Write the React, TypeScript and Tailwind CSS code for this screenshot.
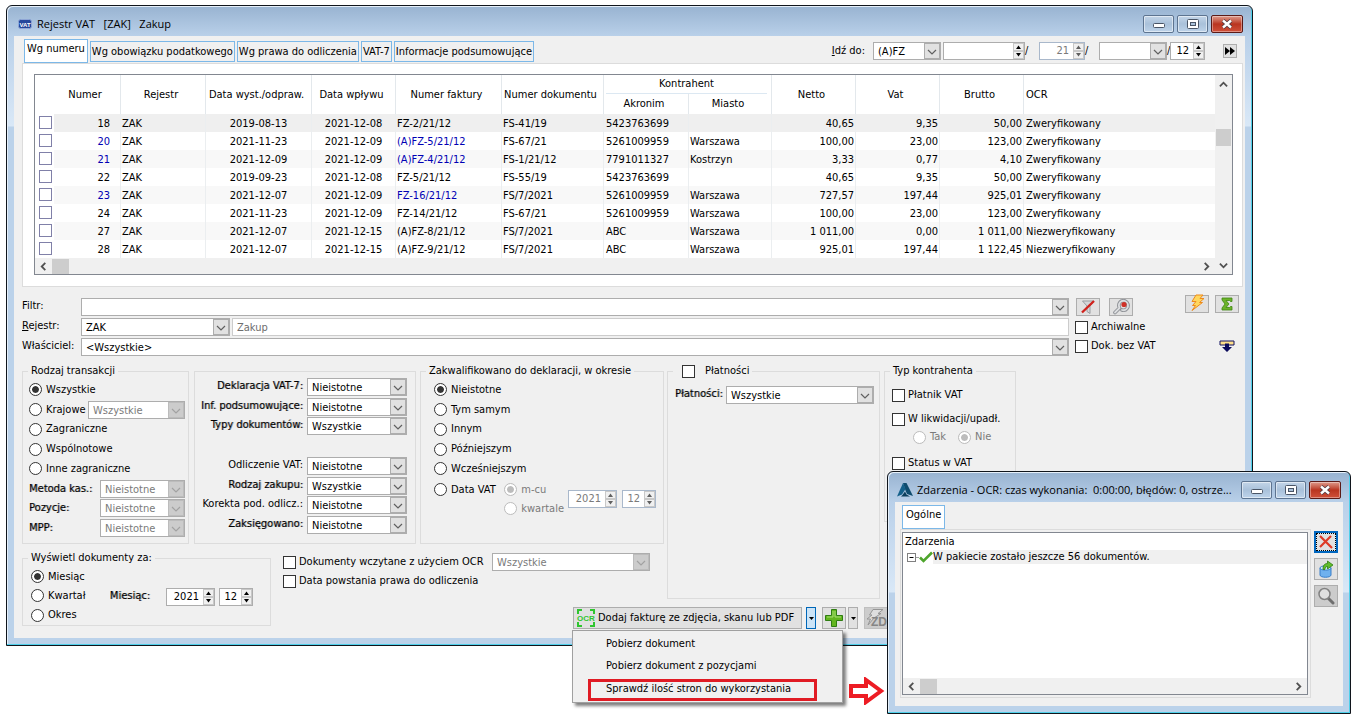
import clsx from 'clsx';
import { ReactNode } from 'react';

interface IInvoice {
    no: number;
    date: string;
    received: string;
    invoice: string;
    document: string;
    acronym: string;
    city: string;
    net: string;
    vat: string;
    gross: string;
    ocr: string;
    blueNo?: boolean;
    blueInvoice?: boolean;
}

const invoices: IInvoice[] = [
    { no: 18, date: '2019-08-13', received: '2021-12-08', invoice: 'FZ-2/21/12', document: 'FS-41/19', acronym: '5423763699', city: '', net: '40,65', vat: '9,35', gross: '50,00', ocr: 'Zweryfikowany' },
    { no: 20, date: '2021-11-23', received: '2021-12-09', invoice: '(A)FZ-5/21/12', document: 'FS-67/21', acronym: '5261009959', city: 'Warszawa', net: '100,00', vat: '23,00', gross: '123,00', ocr: 'Zweryfikowany', blueNo: true, blueInvoice: true },
    { no: 21, date: '2021-12-09', received: '2021-12-09', invoice: '(A)FZ-4/21/12', document: 'FS-1/21/12', acronym: '7791011327', city: 'Kostrzyn', net: '3,33', vat: '0,77', gross: '4,10', ocr: 'Zweryfikowany', blueNo: true, blueInvoice: true },
    { no: 22, date: '2019-09-23', received: '2021-12-08', invoice: 'FZ-5/21/12', document: 'FS-55/19', acronym: '5423763699', city: '', net: '40,65', vat: '9,35', gross: '50,00', ocr: 'Zweryfikowany' },
    { no: 23, date: '2021-12-07', received: '2021-12-09', invoice: 'FZ-16/21/12', document: 'FS/7/2021', acronym: '5261009959', city: 'Warszawa', net: '727,57', vat: '197,44', gross: '925,01', ocr: 'Zweryfikowany', blueNo: true, blueInvoice: true },
    { no: 24, date: '2021-11-23', received: '2021-12-09', invoice: 'FZ-14/21/12', document: 'FS-67/21', acronym: '5261009959', city: 'Warszawa', net: '100,00', vat: '23,00', gross: '123,00', ocr: 'Zweryfikowany' },
    { no: 27, date: '2021-12-07', received: '2021-12-15', invoice: '(A)FZ-8/21/12', document: 'FS/7/2021', acronym: 'ABC', city: 'Warszawa', net: '1 011,00', vat: '0,00', gross: '1 011,00', ocr: 'Niezweryfikowany' },
    { no: 28, date: '2021-12-07', received: '2021-12-15', invoice: '(A)FZ-9/21/12', document: 'FS/7/2021', acronym: 'ABC', city: 'Warszawa', net: '925,01', vat: '197,44', gross: '1 122,45', ocr: 'Niezweryfikowany' },
];

const tabs = ['Wg obowiązku podatkowego', 'Wg prawa do odliczenia', 'VAT-7', 'Informacje podsumowujące'];

const strong = '[text-shadow:1px_0_0_#00000066]';

const Chevron = ({ dir, className }: { dir: 'up' | 'down' | 'left' | 'right'; className?: string }) => {
    const paths = {
        up: 'M1 7 L5 3 L9 7',
        down: 'M1 3 L5 7 L9 3',
        left: 'M7 1 L3 5 L7 9',
        right: 'M3 1 L7 5 L3 9',
    };
    return (
        <svg viewBox="0 0 10 10" className={clsx('size-[9px]', className)} fill="none" stroke="currentColor" strokeWidth="2">
            <path d={paths[dir]} />
        </svg>
    );
};

interface ISelectProps {
    id: string;
    value: string;
    label?: string;
    className?: string;
    disabled?: boolean;
}

const Select = ({ id, value, label, className, disabled }: ISelectProps) => (
    <span className={clsx('flex h-[18px] border border-[#adadad] bg-white', className)}>
        <select
            id={id}
            aria-label={label}
            disabled={disabled}
            className={clsx('min-w-0 flex-1 appearance-none pl-1 pt-[1px] outline-none', disabled && 'text-[#7a7a7a]')}
        >
            <option>{value}</option>
        </select>
        <span
            className={clsx(
                'flex w-4 items-center justify-center border',
                disabled ? 'border-[#bcbcbc] bg-[#cccccc] text-[#a2a2a2]' : 'border-[#adadad] bg-[#e1e1e1] text-[#606060]'
            )}
        >
            <svg viewBox="0 0 10 10" className="mt-1 size-[10px]" fill="none" stroke="currentColor" strokeWidth="1.2">
                <path d="M1 2 L5 6 L9 2" />
            </svg>
        </span>
    </span>
);

interface ISpinProps {
    label: string;
    value: string;
    className?: string;
    disabled?: boolean;
}

const Spin = ({ label, value, className, disabled }: ISpinProps) => (
    <span className={clsx('flex h-[18px] border bg-white', disabled ? 'border-[#a9b8cb]' : 'border-[#adadad]', className)}>
        <input
            aria-label={label}
            defaultValue={value}
            disabled={disabled}
            className={clsx('min-w-0 flex-1 pr-1 text-right outline-none', disabled && 'text-[#7a7a7a]')}
        />
        <span className={clsx('flex w-[11px] flex-col', disabled ? 'text-[#606060]' : 'text-black')}>
            <button type="button" aria-label={`${label} +`} className="flex h-2 items-center justify-center border border-[#c8c8c8] bg-[#f0f0f0]">
                <svg viewBox="0 0 7 4" className="h-1 w-[7px]" fill="currentColor"><path d="M1 4 L3.5 0.500 L6 4 Z" /></svg>
            </button>
            <button type="button" aria-label={`${label} -`} className="flex h-2 items-center justify-center border border-[#c8c8c8] bg-[#f0f0f0]">
                <svg viewBox="0 0 7 4" className="h-1 w-[7px]" fill="currentColor"><path d="M1 0 L3.5 3.500 L6 0 Z" /></svg>
            </button>
        </span>
    </span>
);

interface IOptionProps {
    label: string;
    name?: string;
    checked?: boolean;
    disabled?: boolean;
}

const Radio = ({ label, name, checked, disabled }: IOptionProps) => (
    <label className={clsx('flex items-center gap-1 whitespace-nowrap', disabled && 'text-[#7a7a7a]')}>
        <input
            type="radio"
            name={name}
            defaultChecked={checked}
            disabled={disabled}
            className={clsx(
                'size-[13px] shrink-0 appearance-none rounded-full border bg-white p-[2px] checked:bg-clip-content checked:shadow-[inset_0_0_0_2px_#fff]',
                disabled ? 'border-[#bcbcbc] checked:bg-[#bcbcbc]' : 'border-[#333] checked:bg-[#333]'
            )}
        />
        {label}
    </label>
);

const Check = ({ label, className }: { label: string; className?: string }) => (
    <label className={clsx('flex items-center gap-[3px] whitespace-nowrap', className)}>
        <input type="checkbox" className="size-[13px] shrink-0 appearance-none border border-[#333] bg-white checked:bg-[#333]" />
        {label}
    </label>
);

const Group = ({ legend, className, children }: { legend?: ReactNode; className?: string; children?: ReactNode }) => (
    <fieldset className={clsx('min-w-0 border border-[#dcdcdc]', className)}>
        {legend && <legend className="ml-[5px] h-4 px-[3px] leading-4">{legend}</legend>}
        {children}
    </fieldset>
);

const WindowButtons = () => (
    <div className="flex gap-[3px]">
        <button type="button" aria-label="Minimalizuj" className="flex h-[18px] w-[31px] items-center justify-center rounded-[2px] border border-[#5d7490] bg-gradient-to-b from-[#c3d5e8] via-[#a9c1da] to-[#bdd3ea] shadow-[inset_0_0_0_1px_#ffffff80]">
            <svg viewBox="0 0 12 5" className="mt-1 h-[5px] w-3"><rect x=".5" y=".5" width="11" height="4" rx="1" fill="#fff" stroke="#4a5566" /></svg>
        </button>
        <button type="button" aria-label="Maksymalizuj" className="flex h-[18px] w-[31px] items-center justify-center rounded-[2px] border border-[#5d7490] bg-gradient-to-b from-[#c3d5e8] via-[#a9c1da] to-[#bdd3ea] shadow-[inset_0_0_0_1px_#ffffff80]">
            <svg viewBox="0 0 12 10" className="h-[10px] w-3">
                <rect x=".5" y=".5" width="11" height="9" rx="1" fill="#fff" stroke="#4a5566" />
                <rect x="3.5" y="3.5" width="5" height="3" fill="#a9c1da" stroke="#4a5566" />
            </svg>
        </button>
        <button type="button" aria-label="Zamknij" className="flex h-[18px] w-8 items-center justify-center rounded-[2px] border border-[#5b1a17] bg-gradient-to-b from-[#dd9a8c] via-[#b93420] to-[#d0503a] shadow-[inset_0_0_0_1px_#ffffff60]">
            <svg viewBox="0 0 12 10" className="h-[10px] w-3">
                <path d="M2 1.5 L10 8.5 M10 1.5 L2 8.5" stroke="#4b3a44" strokeWidth="4" />
                <path d="M2 1.5 L10 8.5 M10 1.5 L2 8.5" stroke="#fff" strokeWidth="2.4" />
            </svg>
        </button>
    </div>
);

const Window = ({ icon, title, className, children }: { icon: ReactNode; title: string; className?: string; children: ReactNode }) => (
    <section
        className={clsx(
            'rounded-t-md border border-[#10151c] px-[7px] pb-[7px] shadow-[inset_-1px_-1px_0_#4fd0ea,inset_1px_1px_0_#e6f0fa]',
            'bg-[linear-gradient(#98b3d1,#b9d0e9_30px,#d9e8f7_120px,#bbd2ea_121px)]',
            className
        )}
    >
        <header className="flex h-[30px] items-center gap-1 pl-[2px] pr-[2px] pt-[5px]">
            {icon}
            <h1 className="min-w-0 flex-1 whitespace-pre font-['Open_Sans',sans-serif] text-[11px]">{title}</h1>
            <WindowButtons />
        </header>
        {children}
    </section>
);

const HScroll = () => (
    <div className="flex h-4 items-center bg-[#f0f0f0] text-[#505050]">
        <span className="flex w-[17px] justify-center"><Chevron dir="left" /></span>
        <span className="h-[15px] w-[17px] bg-[#cdcdcd]" />
        <span className="ml-auto flex w-[17px] justify-center"><Chevron dir="right" /></span>
    </div>
);

const ToolButton = ({ label, className, children }: { label: string; className?: string; children: ReactNode }) => (
    <button
        type="button"
        aria-label={label}
        className={clsx('flex w-6 shrink-0 items-center justify-center border border-[#adadad]', className)}
    >
        {children}
    </button>
);

const InvoiceTable = () => {
    const head = 'border-r border-[#e3e8ec] font-normal';
    const cell = 'border-r border-[#ebeef0] pt-[2px]';
    return (
        <table className="w-full table-fixed border-separate border-spacing-0 whitespace-nowrap">
            <colgroup>
                <col className="w-[19px]" />
                <col className="w-[67px]" />
                <col className="w-[85px]" />
                <col className="w-[106px]" />
                <col className="w-[84px]" />
                <col className="w-[106px]" />
                <col className="w-[102px]" />
                <col className="w-[85px]" />
                <col className="w-[83px]" />
                <col className="w-[84px]" />
                <col className="w-[84px]" />
                <col className="w-[84px]" />
                <col />
            </colgroup>
            <thead>
                <tr className="h-[19px]">
                    <th rowSpan={2} aria-label="Wybór" />
                    <th rowSpan={2} className={clsx(head, 'pr-1')}>Numer</th>
                    <th rowSpan={2} className={clsx(head, 'pr-1')}>Rejestr</th>
                    <th rowSpan={2} className={clsx(head, 'pr-1')}>Data wyst./odpraw.</th>
                    <th rowSpan={2} className={clsx(head, 'pr-1')}>Data wpływu</th>
                    <th rowSpan={2} className={clsx(head, 'pr-1')}>Numer faktury</th>
                    <th rowSpan={2} className={clsx(head, 'pr-1')}>Numer dokumentu</th>
                    <th colSpan={2} className={clsx(head, 'p-0')}>
                        <div className="ml-[2px] mr-1 h-[19px] border-b border-[#dce8f2] leading-[18px]">Kontrahent</div>
                    </th>
                    <th rowSpan={2} className={clsx(head, 'pr-1')}>Netto</th>
                    <th rowSpan={2} className={clsx(head, 'pr-1')}>Vat</th>
                    <th rowSpan={2} className={clsx(head, 'pr-1')}>Brutto</th>
                    <th rowSpan={2} className="pl-[2px] text-left font-normal">OCR</th>
                </tr>
                <tr className="h-5">
                    <th className={clsx(head, 'pr-1')}>Akronim</th>
                    <th className={clsx(head, 'pr-1')}>Miasto</th>
                </tr>
            </thead>
            <tbody>
                {invoices.map((row, index) => (
                    <tr
                        key={row.no}
                        className={clsx('h-[18px] leading-4', index === 0 ? 'bg-[#efefef]' : index % 2 === 0 ? 'bg-[#f8f8f8]' : 'bg-white')}
                    >
                        <td className="bg-white pb-[1px] pl-1">
                            <input
                                type="checkbox"
                                aria-label={`Zaznacz ${row.no}`}
                                className="block size-[13px] appearance-none border border-[#8080a8] bg-white checked:bg-[#8080a8]"
                            />
                        </td>
                        <td className={clsx(cell, 'pr-[10px] text-right', row.blueNo && 'text-[#0000b4]')}>{row.no}</td>
                        <td className={clsx(cell, 'pl-[1px]')}>ZAK</td>
                        <td className={clsx(cell, 'text-center')}>{row.date}</td>
                        <td className={clsx(cell, 'text-center')}>{row.received}</td>
                        <td className={clsx(cell, 'pl-[1px]', row.blueInvoice && 'text-[#0000b4]')}>{row.invoice}</td>
                        <td className={clsx(cell, 'pl-[1px]')}>{row.document}</td>
                        <td className={clsx(cell, 'pl-[2px]')}>{row.acronym}</td>
                        <td className={clsx(cell, 'pl-[1px]')}>{row.city}</td>
                        <td className={clsx(cell, 'pr-[1px] text-right')}>{row.net}</td>
                        <td className={clsx(cell, 'pr-[1px] text-right')}>{row.vat}</td>
                        <td className={clsx(cell, 'pr-[1px] text-right')}>{row.gross}</td>
                        <td className="pl-[2px] pt-[2px]">{row.ocr}</td>
                    </tr>
                ))}
            </tbody>
        </table>
    );
};

const GoTo = () => (
    <div className="ml-auto flex items-start pt-[3px]">
        <label htmlFor="goto" className="mr-2 leading-[18px]"><u>I</u>dź do:</label>
        <Select id="goto" value="(A)FZ" className="mr-[2px] h-5 w-[68px]" />
        <Spin label="Numer" value="" className="w-[82px]" />
        <span className="w-[14px] leading-[18px]">/</span>
        <Spin label="Rok" value="21" disabled className="w-[46px]" />
        <span className="w-[14px] leading-[18px]">/</span>
        <Select id="series" label="Seria" value="" className="w-[68px]" />
        <span className="w-[3px] leading-[18px]">/</span>
        <Spin label="Miesiąc" value="12" className="w-[35px]" />
        <button type="button" aria-label="Przejdź" className="ml-[18px] mr-[6px] mt-[2px] flex size-[14px] items-center justify-center border border-[#adadad] bg-[#e1e1e1]">
            <svg viewBox="0 0 11 8" className="h-2 w-[11px] shrink-0"><path d="M0 0 L5 4 L0 8 Z M5 0 L10 4 L5 8 Z" /></svg>
        </button>
    </div>
);

const FilterRows = () => (
    <div className="mt-[11px] flex items-start">
        <div className="grid flex-1 grid-cols-[59px_1fr] gap-y-[2px] leading-4">
            <label htmlFor="filter">Filtr:</label>
            <Select id="filter" value="" />
            <label htmlFor="register"><u>R</u>ejestr:</label>
            <div className="flex gap-[2px]">
                <Select id="register" value="ZAK" className="w-[149px]" />
                <input aria-label="Nazwa rejestru" readOnly value="Zakup" className="h-[18px] min-w-0 flex-1 border border-[#cccccc] bg-white pl-1 text-[#6d6d6d] outline-none" />
            </div>
            <label htmlFor="owner">Właściciel:</label>
            <Select id="owner" value="<Wszystkie>" />
        </div>
        <div className="ml-[6px] flex w-[168px] flex-col">
            <div className="flex h-5 items-start">
                <ToolButton label="Wyczyść filtr" className="ml-[1px] h-[18px] bg-[#e1e1e1]">
                    <svg viewBox="0 0 18 16" className="h-4 w-[18px]">
                        <path d="M3.500 2 H15 L11 7 V14.500 L8 12.500 V7 Z" fill="#d4d6d9" stroke="#9a9da1" />
                        <path d="M3 13.500 L15 2" stroke="#d0211c" strokeWidth="2.4" />
                    </svg>
                </ToolButton>
                <ToolButton label="Konstruktor filtra" className="ml-[9px] h-[18px] bg-[#e1e1e1]">
                    <svg viewBox="0 0 18 16" className="h-4 w-[18px]" fill="none">
                        <path d="M3 13.500 L7.500 9 C5.500 4 9 1 13 2 C16 3 17 7 15 9.500 C14 11 12 11.500 10 11" stroke="#8b8e93" strokeWidth="3.600" strokeLinecap="round" />
                        <path d="M3 13.500 L7.500 9 C5.500 4 9 1 13 2 C16 3 17 7 15 9.500 C14 11 12 11.500 10 11" stroke="#dcdee0" strokeWidth="1.800" strokeLinecap="round" />
                        <circle cx="12" cy="5.500" r="2.600" fill="#cf3128" />
                    </svg>
                </ToolButton>
                <ToolButton label="Przelicz" className="-mt-[3px] ml-auto h-[18px] bg-[#e1e1e1]">
                    <svg viewBox="0 0 18 18" className="-mt-[2px] size-[18px] shrink-0">
                        <path d="M8 1 H15 L12 4.500 H16 L11.500 8.500 H14.500 L4 16.500 L7.500 11.500 H4.500 L8 7.500 H4 Z" fill="#ffd75e" stroke="#ee8a1c" strokeLinejoin="round" />
                    </svg>
                </ToolButton>
                <ToolButton label="Suma" className="-mt-[3px] ml-[6px] mr-[4px] h-[18px] bg-[#e1e1e1]">
                    <svg viewBox="0 0 14 14" className="size-[14px] shrink-0">
                        <path d="M2 1 H12 V4.500 H10.500 L9.500 3.500 H6 L9 7 L6 10.500 H9.500 L10.500 9.500 H12 V13 H2 V11 L5 7 L2 3 Z" fill="#6cb32a" stroke="#3f8512" strokeWidth=".8" />
                    </svg>
                </ToolButton>
            </div>
            <Check label="Archiwalne" className="h-5 pb-[2px]" />
            <div className="flex h-5 items-center justify-between pb-[4px]">
                <Check label="Dok. bez VAT" />
                <svg viewBox="0 0 16 12" className="mr-2 h-3 w-4">
                    <path d="M1 5 V1 H15 V5 Z" fill="#ffe08a" stroke="#101060" />
                    <path d="M6 3.500 H10 V7 H13 L8 12 L3 7 H6 Z" fill="#0b0b5c" />
                </svg>
            </div>
        </div>
    </div>
);

const transactionLimits = [
    { id: 'cash-method', label: 'Metoda kas.:' },
    { id: 'items', label: 'Pozycje:' },
    { id: 'mpp', label: 'MPP:' },
];

const declarationFilters = [
    { id: 'vat7', label: 'Deklaracja VAT-7:', value: 'Nieistotne', bold: true },
    { id: 'summary', label: 'Inf. podsumowujące:', value: 'Nieistotne', bold: true },
    { id: 'doc-types', label: 'Typy dokumentów:', value: 'Wszystkie', bold: true },
    null,
    { id: 'deduction', label: 'Odliczenie VAT:', value: 'Nieistotne', bold: false },
    { id: 'purchase', label: 'Rodzaj zakupu:', value: 'Wszystkie', bold: true },
    { id: 'correction', label: 'Korekta pod. odlicz.:', value: 'Nieistotne', bold: false },
    { id: 'posted', label: 'Zaksięgowano:', value: 'Nieistotne', bold: true },
];

const FilterGroups = () => (
    <div className="col-span-2 flex items-stretch">
        <Group legend="Rodzaj transakcji" className="w-[167px] pb-[5px]">
            <div className="mt-[1px] grid h-[158px] grid-rows-8 items-center pl-[6px] pr-[3px]">
                <Radio name="kind" label="Wszystkie" checked />
                <div className="flex items-center justify-between">
                    <Radio name="kind" label="Krajowe" />
                    <Select id="domestic" label="Krajowe" value="Wszystkie" disabled className="w-[97px]" />
                </div>
                <Radio name="kind" label="Zagraniczne" />
                <Radio name="kind" label="Wspólnotowe" />
                <Radio name="kind" label="Inne zagraniczne" />
                {transactionLimits.map((item) => (
                    <div key={item.id} className="flex items-center justify-between">
                        <label htmlFor={item.id} className={strong}>{item.label}</label>
                        <Select id={item.id} value="Nieistotne" disabled className="w-[85px]" />
                    </div>
                ))}
            </div>
        </Group>
        <Group className="ml-[5px] mt-2 w-[222px] pb-2 pt-[5px]">
            <div className="grid h-[158px] grid-rows-8 items-center pr-2">
                {declarationFilters.map((item, index) =>
                    item ? (
                        <div key={item.id} className="flex items-start justify-end gap-1">
                            <label htmlFor={item.id} className={clsx('leading-4', item.bold && strong)}>{item.label}</label>
                            <Select id={item.id} value={item.value} className="w-[100px]" />
                        </div>
                    ) : (
                        <div key={index} />
                    )
                )}
            </div>
        </Group>
        <Group legend="Zakwalifikowano do deklaracji, w okresie" className="ml-1 flex-1">
            <div className="mt-[1px] grid h-[158px] grid-rows-8 items-center pl-[13px] pr-[7px]">
                <Radio name="period" label="Nieistotne" checked />
                <Radio name="period" label="Tym samym" />
                <Radio name="period" label="Innym" />
                <Radio name="period" label="Późniejszym" />
                <Radio name="period" label="Wcześniejszym" />
                <div className="row-span-2 flex items-center">
                    <div className="self-start"><Radio name="period" label="Data VAT" /></div>
                    <div className="ml-auto mr-1 flex flex-col gap-1 leading-[15px]">
                        <Radio name="vat-date" label="m-cu" checked disabled />
                        <Radio name="vat-date" label="kwartale" disabled />
                    </div>
                    <Spin label="Rok deklaracji" value="2021" disabled className="w-[49px]" />
                    <Spin label="Miesiąc deklaracji" value="12" disabled className="ml-[5px] w-[34px]" />
                </div>
            </div>
        </Group>
    </div>
);

const DisplayRange = () => (
    <Group legend="Wyświetl dokumenty za:" className="row-span-2 mt-[6px] self-start">
        <div className="mt-[1px] flex items-center">
            <div className="grid h-[58px] grid-rows-3 items-center pl-2">
                <Radio name="range" label="Miesiąc" checked />
                <Radio name="range" label="Kwartał" />
                <Radio name="range" label="Okres" />
            </div>
            <span className={clsx('ml-auto mr-4', strong)}>Miesiąc:</span>
            <Spin label="Rok" value="2021" className="mt-[2px] w-[49px]" />
            <Spin label="Miesiąc" value="12" className="ml-1 mr-[17px] mt-[2px] w-[34px]" />
        </div>
    </Group>
);

const SplitArrow = ({ label, active }: { label: string; active?: boolean }) => (
    <button
        type="button"
        aria-label={label}
        className={clsx('flex h-[22px] w-[10px] items-center justify-center border', active ? 'border-[#0067b8] bg-[#cce4f7]' : 'border-[#adadad] bg-[#e1e1e1]')}
    >
        <svg viewBox="0 0 5 3" className="h-[3px] w-[5px] shrink-0"><path d="M0 0 H5 L2.500 3 Z" /></svg>
    </button>
);

const OcrMenu = () => (
    <div role="menu" className="absolute left-0 top-full z-10 -ml-[1px] mt-[1px] h-[73px] w-[271px] border border-[#a0a0a0] bg-[#f0f0f0] shadow-[3px_3px_3px_#00000080]">
        <button type="button" role="menuitem" className="block h-[22px] pl-[33px] pt-1">Pobierz dokument</button>
        <button type="button" role="menuitem" className="block h-[22px] pl-[33px] pt-1">Pobierz dokument z pozycjami</button>
        <button type="button" role="menuitem" className="ml-[15px] mt-1 flex h-[22px] w-[229px] items-center border-[3px] border-[#e01b24] pb-[2px] pl-[15px]">
            Sprawdź ilość stron do wykorzystania
        </button>
    </div>
);

const BottomBar = () => (
    <div className="col-span-3 flex pb-[9px] pl-[302px] pt-2">
        <div className="relative">
            <button type="button" className="flex h-[22px] w-[229px] items-center gap-[2px] whitespace-nowrap border border-[#adadad] bg-[#e1e1e1] pl-[2px]">
                <svg viewBox="0 0 20 18" className="h-[18px] w-5 shrink-0">
                    <path d="M2 5 V1 H6 M14 1 H18 V5 M18 13 V17 H14 M6 17 H2 V13" fill="none" stroke="#2fc52f" strokeWidth="2" />
                    <text x="10" y="12" textAnchor="middle" fontSize="8" fontWeight="bold" fontFamily="Liberation Sans" fill="#2fc52f">OCR</text>
                </svg>
                Dodaj fakturę ze zdjęcia, skanu lub PDF
            </button>
            <OcrMenu />
        </div>
        <span className="ml-1 mr-[6px] flex"><SplitArrow label="Opcje OCR" active /></span>
        <ToolButton label="Dodaj" className="h-[22px] bg-[#e1e1e1]">
            <svg viewBox="0 0 18 18" className="size-[18px] shrink-0">
                <path d="M6.500 .5 H11.500 V6.500 H17.500 V11.500 H11.500 V17.500 H6.500 V11.500 H.5 V6.500 H6.500 Z" fill="#62b51e" stroke="#2f7d12" />
                <path d="M8 2 V8 H2 M10 2 V8 H16" fill="none" stroke="#a6de72" />
            </svg>
        </ToolButton>
        <span className="ml-[2px] mr-[6px] flex"><SplitArrow label="Opcje dodawania" /></span>
        <button type="button" aria-label="ZD" className="flex h-[22px] w-[30px] items-center border border-[#bfbfbf] bg-[#cccccc]">
            <svg viewBox="0 0 24 20" className="h-5 w-6 shrink-0">
                <path d="M8 1.500 H18 L13 5.500 H16 L9 10 L3 17 L5.500 11 H2 L7 7 H4.500 Z" fill="#dedede" stroke="#969696" />
                <text x="6" y="18" fontSize="12" fontWeight="bold" fontFamily="Liberation Sans Narrow, Liberation Sans" fill="#858585">ZD</text>
            </svg>
        </button>
    </div>
);

const VatIcon = () => (
    <svg viewBox="0 0 14 10" className="ml-[2px] mr-[1px] h-[10px] w-[14px] shrink-0">
        <rect x=".5" y=".5" width="13" height="9" rx="2" fill="#24479b" stroke="#8fa6d6" />
        <text x="7" y="7.500" textAnchor="middle" fontSize="6" fontWeight="bold" fontFamily="Liberation Sans" fill="#fff">VAT</text>
    </svg>
);

const EventsIcon = () => (
    <svg viewBox="0 0 16 14" className="h-[14px] w-4 shrink-0">
        <path d="M6 0 H9.500 L16 13 L10 11 L8.500 7.500 Z" fill="#0f4c6e" />
        <path d="M6 0 L8.500 6 L5 11.500 L0 13.500 Z" fill="#14608a" />
        <path d="M5.500 12 L8 8.500 L9.500 11.500 L13 13.500 H4 Z" fill="#0c3f5c" />
    </svg>
);

const EventsWindow = () => (
    <Window
        icon={<EventsIcon />}
        title="Zdarzenia - OCR: czas wykonania:  0:00:00, błędów: 0, ostrze..."
        className="absolute right-[6px] top-[471px] z-20 w-[464px]"
    >
        <div className="bg-[#f0f0f0] pb-2 pl-[5px] pr-[5px] pt-[3px]">
            <button type="button" className="ml-[2px] block h-6 border border-[#7cb8e8] bg-white px-[3px] pb-1">Ogólne</button>
            <div className="flex">
                <div className="flex-1 border border-[#dcdcdc] p-[2px] pl-[1px]">
                    <div className="flex h-[163px] flex-col border border-[#828790] bg-white">
                        <div className="h-[17px] pl-[2px] pt-[1px]">Zdarzenia</div>
                        <div className="flex h-[14px] items-center pl-1">
                            <svg viewBox="0 0 12 9" className="h-[9px] w-3 shrink-0">
                                <rect x=".5" y=".5" width="8" height="8" fill="#fff" stroke="#808080" />
                                <path d="M2.500 4.500 H6.500" stroke="#000" />
                                <path d="M9 4.500 H12" stroke="#a0a0a0" />
                            </svg>
                            <svg viewBox="0 0 14 12" className="h-3 w-[14px] shrink-0">
                                <path d="M1 6.500 L4.500 10 L13 1.500" fill="none" stroke="#4ea52c" strokeWidth="2.600" />
                            </svg>
                            <span className="flex-1 bg-[#f0f0f0] leading-[14px]">W pakiecie zostało jeszcze 56 dokumentów.</span>
                        </div>
                        <div className="mt-auto"><HScroll /></div>
                    </div>
                </div>
                <div className="ml-[3px] flex flex-col gap-[5px] pt-[2px]">
                    <button type="button" aria-label="Zamknij okno" className="flex h-[22px] w-6 items-center justify-center border-2 border-[#0067c0] bg-[#e1e1e1] outline-dotted outline-1 -outline-offset-3 outline-black">
                        <svg viewBox="0 0 18 16" className="h-4 w-[18px] shrink-0"><path d="M3 2 L15 14 M14 2 L3 13" stroke="#dd3a26" strokeWidth="2.2" /></svg>
                    </button>
                    <ToolButton label="Eksport" className="h-[22px] bg-[#e1e1e1]">
                        <svg viewBox="0 0 18 18" className="size-[18px]">
                            <path d="M3 8 V15 C3 18 14 18 14 15 V8 Z" fill="#6fb1ee" stroke="#3a7fc9" />
                            <ellipse cx="8.500" cy="8" rx="5.500" ry="2.200" fill="#cfe6fb" stroke="#3a7fc9" />
                            <path d="M6 9.500 C6 6 7 3.500 10.500 3.500 V1 L16 5 L10.500 9 V6.500 C8.500 6.500 8 8 8 9.500 Z" fill="#62bd2b" stroke="#2f7d12" strokeWidth=".8" />
                        </svg>
                    </ToolButton>
                    <ToolButton label="Podgląd" className="h-[22px] bg-[#cccccc]">
                        <svg viewBox="0 0 18 18" className="size-[18px]">
                            <path d="M11 11 L16 16" stroke="#6f6f6f" strokeWidth="3" strokeLinecap="round" />
                            <circle cx="7.500" cy="7" r="5.500" fill="#e0e0e0" stroke="#828282" strokeWidth="1.500" />
                        </svg>
                    </ToolButton>
                </div>
            </div>
        </div>
    </Window>
);

const App = () => {
    return (
        <div className="relative min-h-screen overflow-hidden bg-white pb-[70px] pl-[6px] pr-[104px] pt-[5px] font-['DejaVu_Sans_Condensed','Noto_Sans',sans-serif] text-[11px] leading-4 text-black">
            <Window icon={<VatIcon />} title="Rejestr VAT   [ZAK]   Zakup">
                <main className="bg-[#f0f0f0] pl-[8px] pr-[2px]">
                    {/* Tabs */}
                    <div className="flex h-[27px] items-end gap-[2px] whitespace-nowrap pl-[2px]">
                        <button type="button" className="h-6 self-end border border-[#7cb8e8] bg-white px-[2px] pb-1">Wg numeru</button>
                        {tabs.map((tab) => (
                            <button key={tab} type="button" className="mb-[1px] h-[21px] border border-[#7cb8e8] bg-[#f0f0f0] px-[1px] pt-[1px]">{tab}</button>
                        ))}
                        <div className="ml-auto self-stretch pt-[3px]"><GoTo /></div>
                    </div>

                    {/* Invoice list */}
                    <div className="border border-[#dcdcdc] bg-white pb-[11px] pl-[11px] pr-[9px] pt-[10px]">
                        <div className="flex border border-[#828790]">
                            <div className="min-w-0 flex-1">
                                <InvoiceTable />
                                <HScroll />
                            </div>
                            <div className="flex w-[17px] flex-col items-center bg-[#f0f0f0] text-[#505050]">
                                <Chevron dir="up" className="mt-[5px]" />
                                <span className="mt-10 h-[17px] w-[15px] bg-[#cdcdcd]" />
                                <Chevron dir="down" className="mb-1 mt-auto" />
                            </div>
                        </div>
                    </div>

                    <FilterRows />

                    {/* Groups */}
                    <div className="mt-[5px] grid grid-cols-[249px_393px_216px_136px]">
                        <FilterGroups />
                        <Group
                            className="row-span-2 ml-[3px]"
                            legend={
                                <label className="flex items-center gap-[10px] pl-[6px]">
                                    <input type="checkbox" className="size-[13px] appearance-none border border-[#333] bg-white checked:bg-[#333]" />
                                    Płatności
                                </label>
                            }
                        >
                            <div className="mt-[7px] flex justify-between pl-[7px] pr-[5px]">
                                <label htmlFor="payments" className={strong}>Płatności:</label>
                                <Select id="payments" value="Wszystkie" className="w-[148px]" />
                            </div>
                        </Group>
                        <Group legend="Typ kontrahenta" className="ml-1 h-[159px]">
                            <div className="flex flex-col pl-[7px] pt-2">
                                <Check label="Płatnik VAT" />
                                <Check label="W likwidacji/upadł." className="mt-2" />
                                <div className="mb-[10px] ml-[21px] mt-[2px] flex gap-3">
                                    <Radio name="liquidation" label="Tak" disabled />
                                    <Radio name="liquidation" label="Nie" checked disabled />
                                </div>
                                <Check label="Status w VAT" />
                            </div>
                        </Group>
                        <DisplayRange />
                        <div className="h-[55px] pl-3 pt-[9px]">
                            <div className="flex items-center justify-between pr-[14px]">
                                <Check label="Dokumenty wczytane z użyciem OCR" />
                                <Select id="ocr-filter" label="OCR" value="Wszystkie" disabled className="w-[158px]" />
                            </div>
                            <Check label="Data powstania prawa do odliczenia" className="mt-[2px]" />
                        </div>
                        <BottomBar />
                    </div>
                </main>
            </Window>

            <svg viewBox="0 0 37 28" className="absolute right-[472px] top-[677px] h-7 w-[37px]">
                <path d="M3 9 H18 V3 L33 14 L18 25 V19 H3 Z" fill="#fff" stroke="#ed1c24" strokeWidth="4" />
            </svg>
            <EventsWindow />
        </div>
    );
};

export default App;
